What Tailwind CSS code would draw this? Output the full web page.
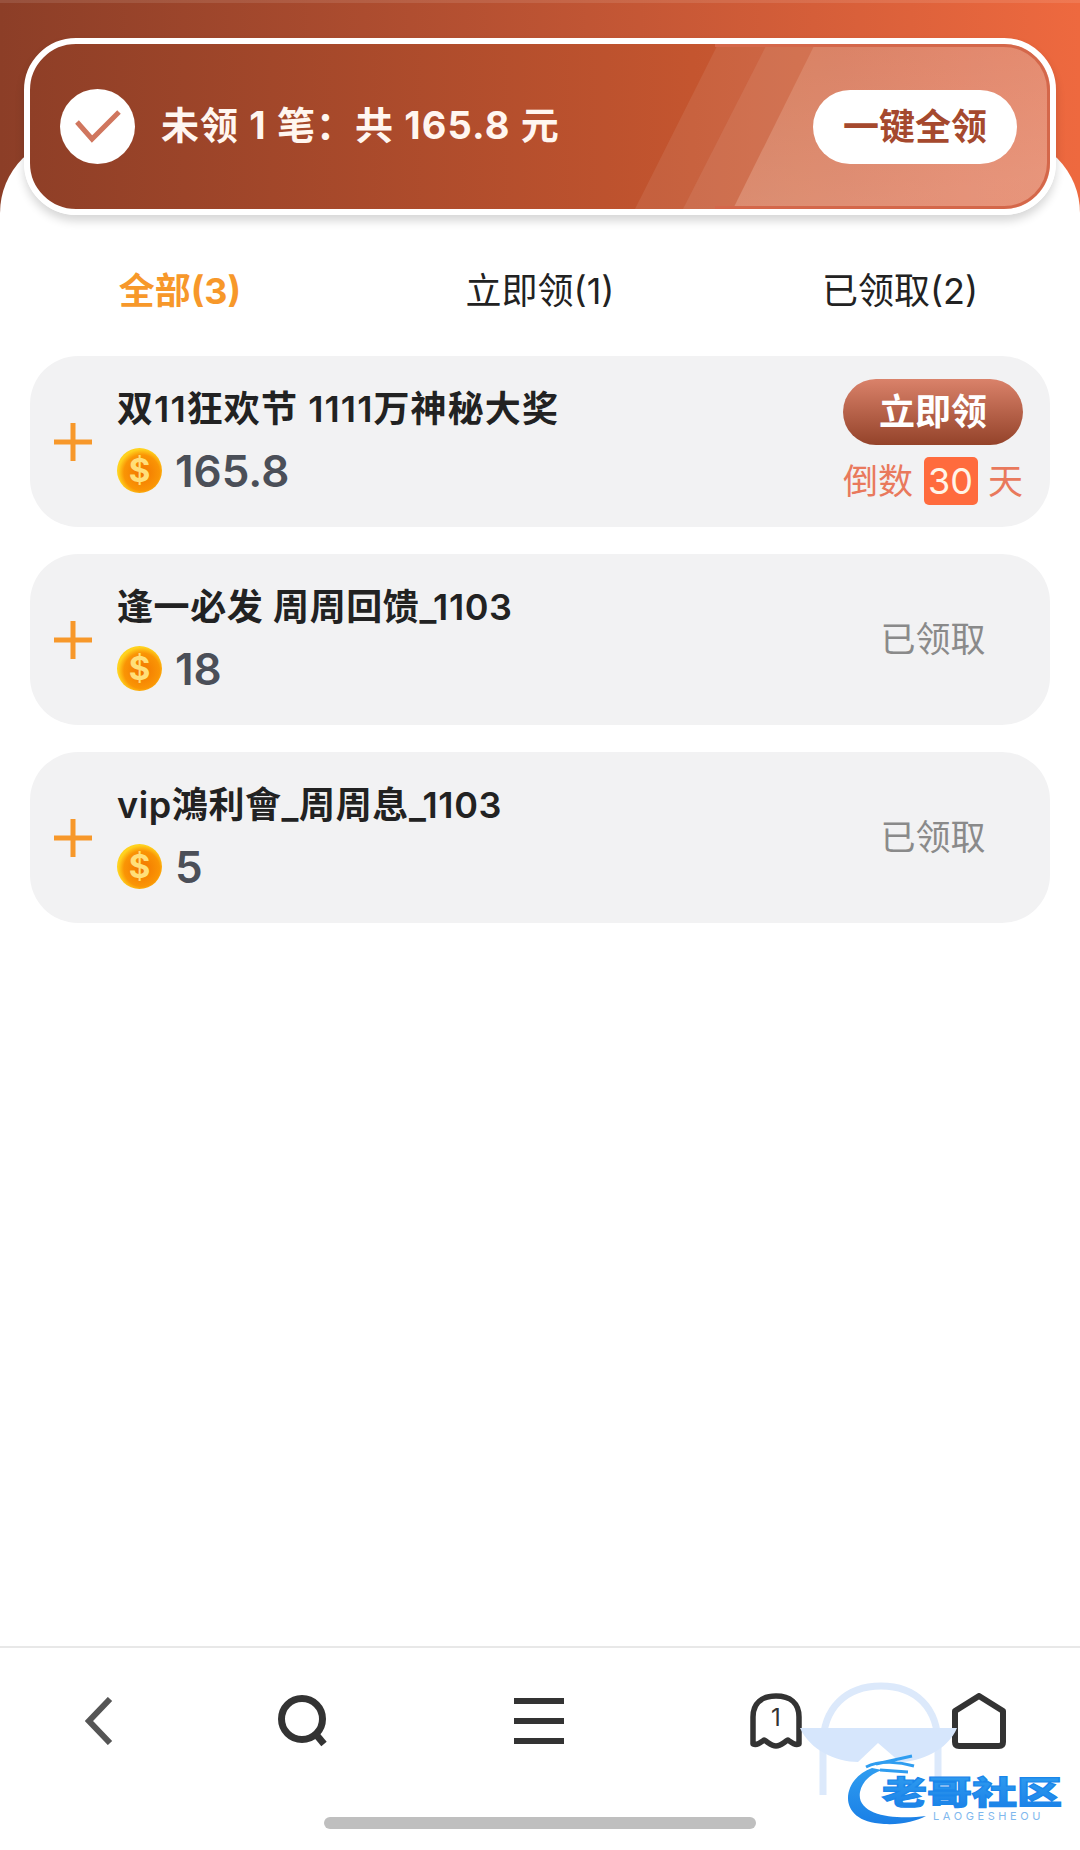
<!DOCTYPE html>
<html lang="zh">
<head>
    <meta charset="UTF-8">
    <meta name="viewport" content="width=device-width, initial-scale=1.0">
    <title>Rewards</title>
    <script src="https://cdn.jsdelivr.net/npm/@tailwindcss/browser@4"></script>
</head>
<body class="bg-white">
    <div class="relative w-[1080px] h-[1850px] overflow-hidden flex flex-col bg-linear-to-r from-[#8c3e27] to-[#ee693f] font-['Inter','Noto_Sans_CJK_SC',sans-serif]">
        <div class="absolute top-0 inset-x-0 h-[3px] bg-white/10"></div>

        <!-- Banner -->
        <div class="relative z-10 mt-[38px] mx-[24px] h-[177px] rounded-[52px] border-[6px] border-white shadow-[0_6px_10px_rgba(0,0,0,0.16)] bg-linear-to-r from-[#8f3f27] via-[#c4552f] via-65% to-[#dc6340] overflow-hidden flex items-center pl-[30px] pr-[33px]">
            <svg class="absolute inset-0" width="1020" height="165" viewBox="0 0 1020 165">
                <defs>
                    <linearGradient id="shine" x1="0" y1="0" x2="0.3" y2="1">
                        <stop offset="0" stop-color="#ffe2d4" stop-opacity="0.14"/>
                        <stop offset="1" stop-color="#ffe2d4" stop-opacity="0.26"/>
                    </linearGradient>
                </defs>
                <polygon points="688,0 1020,0 1020,165 605,165" fill="#ffffff" fill-opacity="0.08"/>
                <polygon points="737,0 1020,0 1020,165 653,165" fill="#ffffff" fill-opacity="0.08"/>
                <polygon points="785,0 1020,0 1020,165 703,165" fill="url(#shine)"/>
            </svg>
            <div class="absolute right-0 inset-y-0 w-[335px] rounded-r-[46px] border-y-[3px] border-r-[3px] border-[#d4674a]"></div>
            <svg class="relative shrink-0" width="75" height="75" viewBox="0 0 75 75">
                <circle cx="37.5" cy="37.5" r="37.5" fill="#fff"/>
                <path d="M17 33 L32 50 L59 23" fill="none" stroke="#d0765e" stroke-width="5"/>
            </svg>
            <span class="relative ml-[26px] pb-[2px] text-[38px] font-bold text-[#fff6f0] tracking-[1.1px]">未领 1 笔：共 165.8 元</span>
            <button class="relative ml-auto w-[204px] h-[74px] rounded-full bg-white text-[36px] font-bold text-[#a5492e]">一键全领</button>
        </div>

        <!-- Sheet -->
        <div class="-mt-[79px] flex-1 bg-white rounded-t-[77px] flex flex-col">
            <div class="mt-[125px] grid grid-cols-3 h-[60px] items-center text-center text-[36px] text-[#222]">
                <span class="font-bold text-[#f7982a]">全部(3)</span>
                <span>立即领(1)</span>
                <span>已领取(2)</span>
            </div>

            <div class="mt-[35px] mx-[30px] flex flex-col gap-[27px]">
                <!-- Card 1 -->
                <div class="h-[171px] rounded-[48px] bg-[#f2f2f3] flex items-center pl-[24px] pr-[27px]">
                    <svg class="shrink-0" width="38" height="38" viewBox="0 0 38 38"><path d="M0 19H38M19 0V38" stroke="#f7982a" stroke-width="5"/></svg>
                    <div class="ml-[25px] pb-[3px] flex flex-col gap-[17px]">
                        <div class="text-[36px] leading-[44px] tracking-[1.1px] font-semibold text-[#222]">双11狂欢节 1111万神秘大奖</div>
                        <div class="flex items-center h-[46px]">
                            <svg width="45" height="45" viewBox="0 0 45 45">
                                <defs>
                                    <radialGradient id="coin" cx="0.55" cy="0.55" r="0.55">
                                        <stop offset="0" stop-color="#f27400"/>
                                        <stop offset="0.72" stop-color="#fa9505"/>
                                        <stop offset="0.95" stop-color="#ffd21e"/>
                                    </radialGradient>
                                </defs>
                                <circle cx="22.5" cy="22.5" r="22.5" fill="url(#coin)"/>
                                <text x="22.5" y="34" text-anchor="middle" font-size="33" font-weight="700" fill="#ffdf7a">$</text>
                            </svg>
                            <span class="ml-[13px] text-[44px] font-semibold text-[#4b4f58]">165.8</span>
                        </div>
                    </div>
                    <div class="ml-auto w-[180px] flex flex-col items-center">
                        <button class="w-[180px] h-[66px] rounded-full bg-linear-to-b from-[#da826a] to-[#94432a] text-[36px] font-bold text-white">立即领</button>
                        <div class="mt-[12px] w-full flex items-center justify-between text-[35px] text-[#e9795c] leading-[48px]">
                            <span>倒数</span>
                            <span class="w-[54px] h-[48px] rounded-[5px] bg-[#ff6b3d] text-[36px] text-[#fff5e8] text-center">30</span>
                            <span>天</span>
                        </div>
                    </div>
                </div>

                <!-- Card 2 -->
                <div class="h-[171px] rounded-[48px] bg-[#f2f2f3] flex items-center pl-[24px] pr-[27px]">
                    <svg class="shrink-0" width="38" height="38" viewBox="0 0 38 38"><path d="M0 19H38M19 0V38" stroke="#f7982a" stroke-width="5"/></svg>
                    <div class="ml-[25px] pb-[3px] flex flex-col gap-[17px]">
                        <div class="text-[36px] leading-[44px] tracking-[0.6px] font-semibold text-[#222]">逢一必发 周周回馈_1103</div>
                        <div class="flex items-center h-[46px]">
                            <svg width="45" height="45" viewBox="0 0 45 45">
                                <circle cx="22.5" cy="22.5" r="22.5" fill="url(#coin)"/>
                                <text x="22.5" y="34" text-anchor="middle" font-size="33" font-weight="700" fill="#ffdf7a">$</text>
                            </svg>
                            <span class="ml-[13px] text-[44px] font-semibold text-[#4b4f58]">18</span>
                        </div>
                    </div>
                    <div class="ml-auto w-[180px] text-center text-[35px] text-[#8a8a8a]">已领取</div>
                </div>

                <!-- Card 3 -->
                <div class="h-[171px] rounded-[48px] bg-[#f2f2f3] flex items-center pl-[24px] pr-[27px]">
                    <svg class="shrink-0" width="38" height="38" viewBox="0 0 38 38"><path d="M0 19H38M19 0V38" stroke="#f7982a" stroke-width="5"/></svg>
                    <div class="ml-[25px] pb-[3px] flex flex-col gap-[17px]">
                        <div class="text-[36px] leading-[44px] tracking-[0.6px] font-semibold text-[#222]">vip鴻利會_周周息_1103</div>
                        <div class="flex items-center h-[46px]">
                            <svg width="45" height="45" viewBox="0 0 45 45">
                                <circle cx="22.5" cy="22.5" r="22.5" fill="url(#coin)"/>
                                <text x="22.5" y="34" text-anchor="middle" font-size="33" font-weight="700" fill="#ffdf7a">$</text>
                            </svg>
                            <span class="ml-[13px] text-[44px] font-semibold text-[#4b4f58]">5</span>
                        </div>
                    </div>
                    <div class="ml-auto w-[180px] text-center text-[35px] text-[#8a8a8a]">已领取</div>
                </div>
            </div>

            <!-- Bottom nav -->
            <div class="mt-auto h-[204px] border-t-2 border-[#e8e8e8] flex flex-col">
                <div class="mt-[45px] grid grid-cols-[198px_212px_258px_216px_190px] h-[56px] items-center justify-items-center">
                    <svg width="28" height="48" viewBox="0 0 28 48"><path d="M25 2 L4 24 L25 46" fill="none" stroke="#555" stroke-width="6"/></svg>
                    <svg width="52" height="52" viewBox="0 0 52 52"><circle cx="24" cy="24" r="20.5" fill="none" stroke="#333" stroke-width="7"/><path d="M36 37 L46 49" stroke="#333" stroke-width="7"/></svg>
                    <div class="w-[50px] h-[46px] flex flex-col justify-between">
                        <div class="h-[6px] bg-[#333]"></div>
                        <div class="h-[6px] bg-[#333]"></div>
                        <div class="h-[6px] bg-[#333]"></div>
                    </div>
                    <div class="relative w-[52px] h-[56px]">
                        <svg width="52" height="56" viewBox="0 0 52 56"><path d="M3 51 V24 C3 10 12 3 26 3 C40 3 49 10 49 24 V51 C44 53 41 49 38 47 C34 49 31 53 26 53 C21 53 18 49 14 47 C11 49 8 53 3 51 Z" fill="none" stroke="#333" stroke-width="5.5" stroke-linejoin="round"/></svg>
                        <span class="absolute inset-x-0 top-[10px] text-center text-[24px] leading-[30px] text-[#333]">1</span>
                    </div>
                    <svg width="54" height="56" viewBox="0 0 54 56"><path d="M3 18 L27 3 L51 18 V49 Q51 53 47 53 H7 Q3 53 3 49 Z" fill="none" stroke="#333" stroke-width="6" stroke-linejoin="round"/></svg>
                </div>
                <div class="mt-auto mb-[21px] mx-auto w-[432px] h-[12px] rounded-full bg-[#bfbfbf]"></div>
            </div>
        </div>

        <!-- Watermark -->
        <svg class="absolute left-[780px] top-[1670px] pointer-events-none" width="300" height="170" viewBox="0 0 300 170">
            <defs>
                <linearGradient id="brand" x1="0" y1="0" x2="0" y2="1">
                    <stop offset="0" stop-color="#2f9df0"/>
                    <stop offset="1" stop-color="#1a7fe6"/>
                </linearGradient>
            </defs>
            <path d="M43 125 V75 C43 38 66 16 101 16 C136 16 158 38 158 75 V108" fill="none" stroke="#dce9fb" stroke-width="7"/>
            <path d="M20 58 H177 C168 80 140 92 120 92 L98 73 L78 92 C56 92 30 80 20 58 Z" fill="#d6e6fc"/>
            <path d="M92 98 C62 108 54 152 104 154 C122 155 136 151 146 146 C116 150 76 146 80 122 C82 112 90 104 102 100 Z" fill="url(#brand)"/>
            <path d="M86 97 C100 90 120 92 134 96 M96 94 L132 86 M100 100 L128 102" fill="none" stroke="#2f9df0" stroke-width="3"/>
            <text x="102" y="134" font-size="32" font-weight="900" textLength="180" lengthAdjust="spacingAndGlyphs" fill="url(#brand)" stroke="#1a86ea" stroke-width="1.2">老哥社区</text>
            <text x="153" y="150" font-size="11" letter-spacing="3.6" fill="#7fb8ee">LAOGESHEOU</text>
        </svg>
    </div>
</body>
</html>
